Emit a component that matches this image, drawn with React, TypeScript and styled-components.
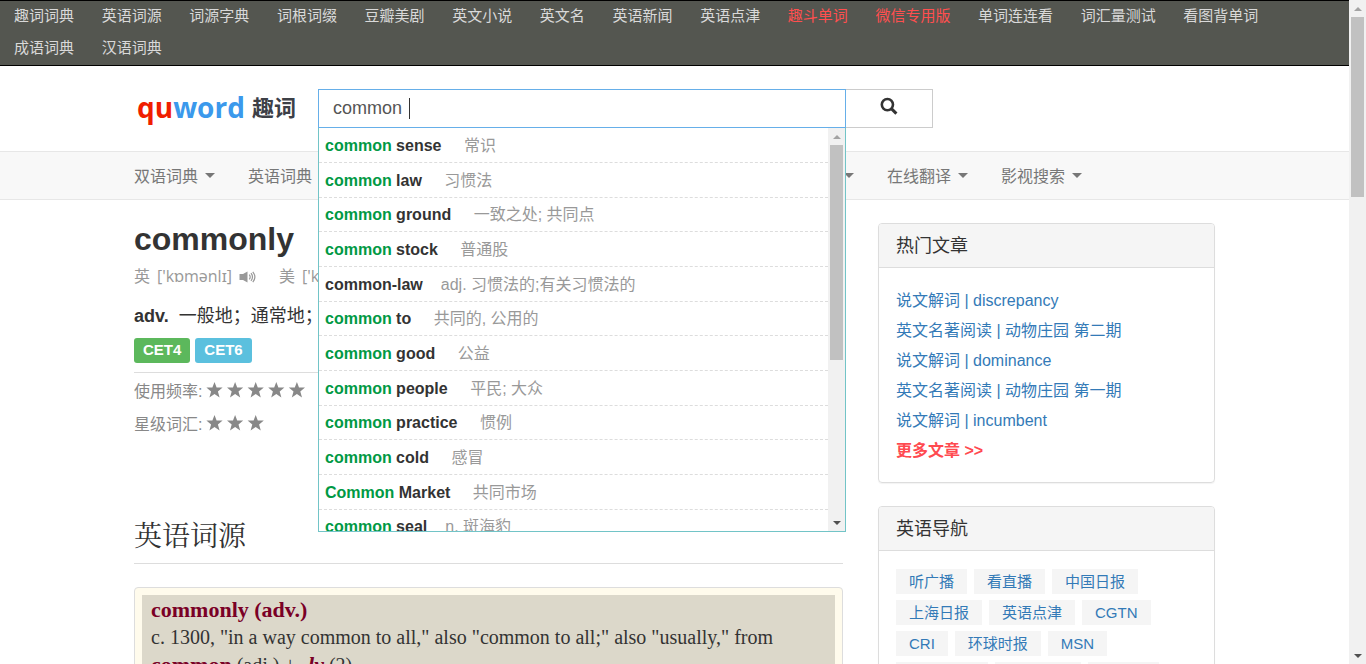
import React from "react";
import styled, { createGlobalStyle } from "styled-components";

const GlobalStyle = createGlobalStyle`
  * { box-sizing: border-box; }
  body {
    margin: 0;
    background: #fff;
    color: #333;
    font-family: "Liberation Sans", "Noto Sans CJK SC", sans-serif;
    font-size: 16px;
  }
  h1, h2, h3, p, ul, dl, dd { margin: 0; padding: 0; }
  ul { list-style: none; }
  a { text-decoration: none; color: #337ab7; }
  button, input { font-family: inherit; }
`;

const Shell = styled.div`
  display: grid;
  grid-template-columns: minmax(0, 1fr) 17px;
  height: 100vh;
  overflow: hidden;
`;

const Page = styled.div`
  min-width: 0;
  overflow: hidden;
`;

const Container = styled.div`
  width: 100%;
  max-width: 1081px;
  margin: 0 auto;
`;

const TopBar = styled.nav`
  padding-left: 2px;
  background: #545650;
  border-top: 1px solid #000;
  border-bottom: 1px solid #000;
  font-size: 13px;
  line-height: 32px;
`;

const TopLink = styled.a<{ $hot?: boolean }>`
  display: inline-block;
  padding: 0 12px;
  height: 32px;
  vertical-align: top;
  line-height: 30px;
  font-size: 15px;
  color: ${(p) => (p.$hot ? "#ff4f4f" : "#d9d9d9")};
`;

const Header = styled.header`
  padding: 23px 0;
`;

const HeaderRow = styled(Container)`
  display: flex;
`;

const Logo = styled.a`
  display: flex;
  flex: 0 0 184px;
  align-items: center;
  gap: 7px;
  padding-left: 3px;
  height: 36px;
  line-height: 36px;
  font-family: "Open Sans", sans-serif;
  font-size: 28px;
  font-weight: 700;
`;

const LogoPart = styled.span<{ $color: string }>`
  color: ${(p) => p.$color};
`;

const LogoName = styled.span`
  height: 38px;
  color: #3d4047;
  font-family: "Noto Sans CJK SC", sans-serif;
  font-size: 22px;
`;

const SearchForm = styled.form`
  display: flex;
  width: 615px;
  height: 39px;
`;

const SearchField = styled.div`
  position: relative;
  flex: 1;
`;

const SearchInput = styled.input`
  display: block;
  width: 100%;
  height: 39px;
  padding: 0 14px;
  border: 1px solid #66afe9;
  border-radius: 0;
  outline: none;
  background: #fff;
  color: #555;
  font-size: 18px;
  caret-color: transparent;
`;

const TextCursor = styled.span`
  position: absolute;
  top: 9px;
  left: 91px;
  width: 1px;
  height: 21px;
  background: #333;
`;

const SearchButton = styled.button`
  width: 87px;
  padding: 0 0 2px;
  border: 1px solid #ccc;
  border-left: 0;
  background: #fff;
  color: #333;
`;

const Suggest = styled.div`
  position: absolute;
  z-index: 5;
  top: 100%;
  left: 0;
  right: 0;
  display: grid;
  grid-template-columns: minmax(0, 1fr) 17px;
  height: 404px;
  background: #fff;
  border: 1px solid #72c4c7;
  border-top: 0;
`;

const SuggestList = styled.ul`
  overflow: hidden;
`;

const SuggestItem = styled.li`
  height: 35px;
  padding-left: 6px;
  border-bottom: 1px dashed #ddd;
  line-height: 35px;
  white-space: pre;
  &:nth-child(3n) {
    height: 34px;
    line-height: 33px;
  }
`;

const Term = styled.b`
  margin-right: 18px;
`;

const Match = styled.span`
  color: #009944;
`;

const Gloss = styled.span`
  color: #999;
`;

const ScrollTrack = styled.div`
  display: grid;
  grid-template-rows: 17px 1fr 17px;
  justify-items: center;
  align-items: center;
  background: #f1f1f1;
`;

const ScrollThumb = styled.div<{ $height: number }>`
  align-self: start;
  width: 13px;
  height: ${(p) => p.$height}px;
  background: #c1c1c1;
`;

const Arrow = styled.span<{ $up?: boolean; $color: string; $size?: number }>`
  width: 0;
  height: 0;
  border: ${(p) => p.$size ?? 4}px solid transparent;
  ${(p) =>
    p.$up
      ? `border-top-width: 0; border-bottom-color: ${p.$color};`
      : `border-bottom-width: 0; border-top-color: ${p.$color};`}
`;

const MainNav = styled.nav`
  background: #f8f8f8;
  border-top: 1px solid #e7e7e7;
  border-bottom: 1px solid #e7e7e7;
`;

const MainNavRow = styled(Container)`
  display: flex;
  justify-content: space-between;
  padding-right: 133px;
`;

const NavGroup = styled.div`
  display: flex;
  gap: 33px;
`;

const NavButton = styled.button`
  display: flex;
  align-items: center;
  gap: 7px;
  height: 47px;
  padding: 0;
  border: 0;
  background: none;
  color: #777;
  font-size: 16px;
  white-space: nowrap;
`;

const NavLabel = styled.span`
  padding-bottom: 2px;
`;

const Columns = styled(Container)`
  display: grid;
  grid-template-columns: minmax(0, 1fr) 337px;
  gap: 35px;
  padding-top: 23px;
`;

const Word = styled.h1`
  font-size: 32px;
  line-height: 32px;
`;

const Phonetics = styled.p`
  display: flex;
  gap: 23px;
  margin-top: 9px;
  color: #999;
  line-height: 25px;
  white-space: nowrap;
`;

const Phonetic = styled.span`
  display: flex;
  align-items: center;
  gap: 7px;
`;

const Ipa = styled.span`
  font-family: "Open Sans", "Noto Sans", sans-serif;
`;

const Definition = styled.p`
  display: flex;
  gap: 10px;
  height: 24px;
  margin-top: 15px;
  font-size: 18px;
  line-height: 24px;
`;

const Badges = styled.div`
  display: flex;
  gap: 5px;
  margin-top: 10px;
  padding-bottom: 9px;
  border-bottom: 1px solid #ddd;
`;

const Badge = styled.span<{ $color: string }>`
  height: 25px;
  padding: 0 9px;
  border-radius: 3px;
  background: ${(p) => p.$color};
  color: #fff;
  font-size: 15px;
  font-weight: 700;
  line-height: 24px;
`;

const Rating = styled.p`
  display: flex;
  align-items: center;
  gap: 4px;
  height: 33px;
  color: #888;
`;

const SectionTitle = styled.h2`
  margin-top: 80px;
  padding-bottom: 8px;
  border-bottom: 1px solid #ddd;
  font-family: "Liberation Serif", "Noto Serif CJK SC", "Noto Sans CJK SC", serif;
  font-size: 28px;
  font-weight: 400;
  line-height: 36px;
`;

const Etymology = styled.section`
  margin-top: 23px;
  padding: 7px;
  border: 1px solid #ddd;
  border-radius: 4px;
  background: #fffbec;
`;

const EtymologyEntry = styled.dl`
  padding: 1px 9px;
  background: #dcd8ca;
  font-family: "Liberation Serif", serif;
  font-size: 20px;
  line-height: 27px;
`;

const EntryWord = styled.dt`
  color: #7a0026;
  font-size: 22px;
  font-weight: 700;
  line-height: 28px;
`;

const CrossRef = styled.a<{ $italic?: boolean }>`
  color: #7a0026;
  font-size: 22px;
  font-weight: 700;
  font-style: ${(p) => (p.$italic ? "italic" : "normal")};
`;

const Panel = styled.section`
  margin-bottom: 23px;
  border: 1px solid #ddd;
  border-radius: 4px;
  box-shadow: 0 1px 1px rgba(0, 0, 0, 0.05);
  overflow: hidden;
`;

const PanelTitle = styled.h3`
  height: 44px;
  padding: 0 17px;
  background: #f5f5f5;
  border-bottom: 1px solid #ddd;
  font-size: 18px;
  font-weight: 400;
  line-height: 45px;
`;

const LinkList = styled.ul`
  padding: 18px 17px 16px;
  line-height: 30px;
`;

const MoreLink = styled.a`
  color: #ff4a50;
  font-weight: 700;
`;

const ChipList = styled.ul`
  display: flex;
  flex-wrap: wrap;
  gap: 6px 7px;
  padding: 18px 17px;
`;

const Chip = styled.a`
  display: block;
  height: 25px;
  padding: 0 13px;
  background: #f5f5f5;
  font-size: 15px;
  line-height: 26px;
`;

const SearchIcon = () => (
  <svg width="18" height="18" viewBox="0 0 18 18" fill="none" stroke="currentColor" aria-hidden="true">
    <circle cx="7.4" cy="7.6" r="5.6" strokeWidth="2.6" />
    <path d="M11.4 11.6 16.4 16.6" strokeWidth="3" />
  </svg>
);

const SpeakerIcon = () => (
  <svg width="17" height="12" viewBox="0 0 17 12" fill="none" stroke="currentColor" aria-hidden="true">
    <path d="M.5 3H4L8.5.4v11.2L4 9H.5z" fill="currentColor" stroke="none" />
    <path d="M10.3 3.6q1.8 2.4 0 4.8M12 2.2q3 3.8 0 7.6M13.8.8q4.2 5.2 0 10.4" strokeWidth="1.2" />
  </svg>
);

const Stars = ({ count }: { count: number }) => (
  <svg width="102" height="18" viewBox="0 0 102 18" fill="currentColor" role="img" aria-label={`${count}`}>
    {Array.from({ length: count }, (_, i) => (
      <path
        key={i}
        transform={`translate(${i * 20.6} 1)`}
        d="M8.5 0 10.6 5.5H16.6L11.9 9.4 13.6 15.4 8.5 12 3.4 15.4 5.1 9.4.4 5.5H6.4z"
      />
    ))}
  </svg>
);

const topLinks: { label: string; hot?: boolean }[] = [
  { label: "趣词词典" },
  { label: "英语词源" },
  { label: "词源字典" },
  { label: "词根词缀" },
  { label: "豆瓣美剧" },
  { label: "英文小说" },
  { label: "英文名" },
  { label: "英语新闻" },
  { label: "英语点津" },
  { label: "趣斗单词", hot: true },
  { label: "微信专用版", hot: true },
  { label: "单词连连看" },
  { label: "词汇量测试" },
  { label: "看图背单词" },
  { label: "成语词典" },
  { label: "汉语词典" },
];

const suggestions: [string, string, string][] = [
  ["common", " sense ", "常识"],
  ["common", " law ", "习惯法"],
  ["common", " ground ", "一致之处; 共同点"],
  ["common", " stock ", "普通股"],
  ["", "common-law", "adj. 习惯法的;有关习惯法的"],
  ["common", " to ", "共同的, 公用的"],
  ["common", " good ", "公益"],
  ["common", " people ", "平民; 大众"],
  ["common", " practice ", "惯例"],
  ["common", " cold ", "感冒"],
  ["Common", " Market ", "共同市场"],
  ["common", " seal", "n. 斑海豹"],
];

const articles = [
  "说文解词 | discrepancy",
  "英文名著阅读 | 动物庄园 第二期",
  "说文解词 | dominance",
  "英文名著阅读 | 动物庄园 第一期",
  "说文解词 | incumbent",
];

const sites = [
  "听广播", "看直播", "中国日报", "上海日报", "英语点津", "CGTN",
  "CRI", "环球时报", "MSN", "TIME时代", "经济学人", "纽约客",
];

const NavItem = ({ label }: { label?: string }) => (
  <NavButton type="button" aria-label={label ?? "更多"}>
    {label && <NavLabel>{label}</NavLabel>}
    <Arrow $color="#777" $size={5} />
  </NavButton>
);

export default function App() {
  return (
    <>
      <GlobalStyle />
      <Shell>
        <Page>
          <TopBar>
            {topLinks.map((l) => (
              <React.Fragment key={l.label}>
                <TopLink href="#" $hot={l.hot}>{l.label}</TopLink>{" "}
              </React.Fragment>
            ))}
          </TopBar>

          <Header>
            <HeaderRow>
              <Logo href="#">
                <span>
                  <LogoPart $color="#f01e00">qu</LogoPart>
                  <LogoPart $color="#3b99ec">word</LogoPart>
                </span>
                <LogoName>趣词</LogoName>
              </Logo>
              <SearchForm>
                <SearchField>
                  <SearchInput type="text" aria-label="查词" defaultValue="common " />
                  <TextCursor />
                  <Suggest>
                    <SuggestList>
                      {suggestions.map(([match, rest, gloss]) => (
                        <SuggestItem key={match + rest}>
                          <Term><Match>{match}</Match>{rest}</Term>
                          <Gloss>{gloss}</Gloss>
                        </SuggestItem>
                      ))}
                    </SuggestList>
                    <ScrollTrack>
                      <Arrow $up $color="#a3a3a3" />
                      <ScrollThumb $height={215} />
                      <Arrow $color="#505050" />
                    </ScrollTrack>
                  </Suggest>
                </SearchField>
                <SearchButton type="button" aria-label="搜索"><SearchIcon /></SearchButton>
              </SearchForm>
            </HeaderRow>
          </Header>

          <MainNav>
            <MainNavRow>
              <NavGroup>
                <NavItem label="双语词典" />
                <NavItem label="英语词典" />
              </NavGroup>
              <NavGroup>
                <NavItem />
                <NavItem label="在线翻译" />
                <NavItem label="影视搜索" />
              </NavGroup>
            </MainNavRow>
          </MainNav>

          <Columns>
            <main>
              <Word>commonly</Word>
              <Phonetics>
                <Phonetic><span>英</span><Ipa>['kɒmənlɪ]</Ipa><SpeakerIcon /></Phonetic>
                <Phonetic><span>美</span><Ipa>['kɑmənli]</Ipa><SpeakerIcon /></Phonetic>
              </Phonetics>
              <Definition><b>adv.</b><span>一般地；通常地；</span></Definition>
              <Badges>
                <Badge $color="#5cb85c">CET4</Badge>
                <Badge $color="#5bc0de">CET6</Badge>
              </Badges>
              <Rating>使用频率:<Stars count={5} /></Rating>
              <Rating>星级词汇:<Stars count={3} /></Rating>
              <SectionTitle>英语词源</SectionTitle>
              <Etymology>
                <EtymologyEntry>
                  <EntryWord>commonly (adv.)</EntryWord>
                  <dd>
                    c. 1300, "in a way common to all," also "common to all;" also "usually," from
                    <br />
                    <CrossRef href="#">common</CrossRef> (adj.) + <CrossRef href="#" $italic>-ly</CrossRef> (2).
                  </dd>
                </EtymologyEntry>
              </Etymology>
            </main>

            <aside>
              <Panel>
                <PanelTitle>热门文章</PanelTitle>
                <LinkList>
                  {articles.map((a) => (
                    <li key={a}><a href="#">{a}</a></li>
                  ))}
                  <li><MoreLink href="#">更多文章 &gt;&gt;</MoreLink></li>
                </LinkList>
              </Panel>
              <Panel>
                <PanelTitle>英语导航</PanelTitle>
                <ChipList>
                  {sites.map((s) => (
                    <li key={s}><Chip href="#">{s}</Chip></li>
                  ))}
                </ChipList>
              </Panel>
            </aside>
          </Columns>
        </Page>
        <ScrollTrack>
          <Arrow $up $color="#a3a3a3" />
          <ScrollThumb $height={180} />
          <Arrow $color="#505050" />
        </ScrollTrack>
      </Shell>
    </>
  );
}
